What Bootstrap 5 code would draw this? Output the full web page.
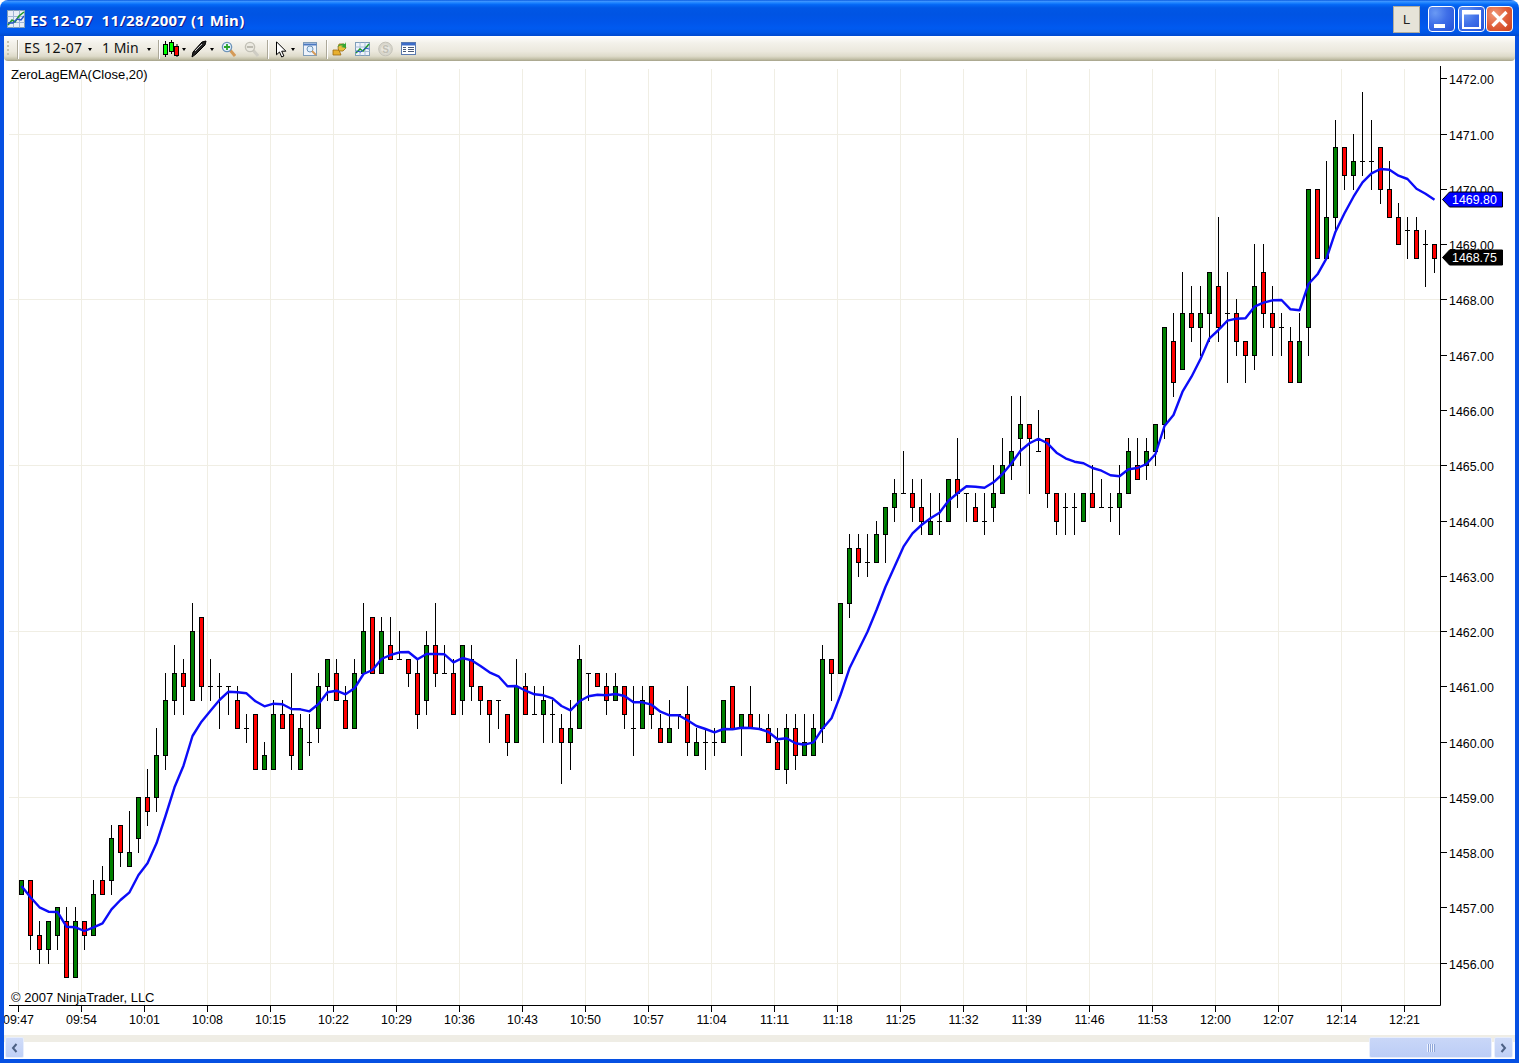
<!DOCTYPE html>
<html lang="en">
<head>
<meta charset="utf-8">
<title>ES 12-07 11/28/2007 (1 Min)</title>
<link href="https://cdn.jsdelivr.net/npm/bootstrap@5.3.0/dist/css/bootstrap.min.css" rel="stylesheet">
<style>
html,body{background:#fff;margin:0;overflow:hidden}
.xpwin{width:1519px;height:1063px}
.xptitle{height:36px;padding:6px 6px 0 7px;border-radius:8px 8px 0 0;
 background:linear-gradient(to bottom,#0a5ae0 0,#3c94ff 4%,#1c83ff 8%,#0468f6 13%,#0057e6 22%,#0054e3 40%,#0055ea 62%,#005af0 78%,#0056e6 90%,#0049cf 100%)}
.xptitle-ico{margin-top:4px}
.xptitle-text{margin-left:5px;font:700 15px/28px "Noto Sans","DejaVu Sans",sans-serif;letter-spacing:.4px;color:#fff;white-space:pre;text-shadow:1px 1px 0 #0f1a89}
.capbtn{width:27px;height:26px;padding:0;border:1px solid #fff;border-radius:4px;display:block}
.capbtn:hover{border-color:#fff}
.cap-min,.cap-max{background:radial-gradient(circle at 25% 25%,#6a9af4 0,#3f6fe8 45%,#2350d8 100%)}
.cap-max{margin-left:3px}
.cap-close{margin-left:1px;background:radial-gradient(circle at 30% 30%,#f09878 0,#e0603c 50%,#c8401c 100%)}
.capbtn-l{width:27px;height:27px;margin-right:8px;padding:0;background:#e6e3d8;border:1px solid #b2ad9c;border-radius:0;font:13px/25px "Liberation Sans",sans-serif;color:#222}
.capbtn-l:hover{background:#e6e3d8;border-color:#b2ad9c}
.xpclient{border:solid #0650e2;border-width:0 4px 4px;height:1027px;background:#fff}
.xptool{height:24px;margin-top:1px;border-radius:0 0 4px 4px;font:14px/24px "Noto Sans",sans-serif;color:#111;
 background:linear-gradient(to bottom,#fdfcf9 0,#f3f1ea 25%,#ebe8dd 60%,#dedbca 80%,#c3c0a8 92%,#a5a28a 100%)}
.tl-grip{width:2px;height:16px;margin-left:3px;background:repeating-linear-gradient(to bottom,#c4c1ae 0 2px,transparent 2px 4px)}
.tl-sep{width:1px;height:19px;background:#aca899;box-shadow:1px 0 0 #fff}
.tl-caret{width:0;height:0;border:solid transparent;border-width:3px 2.5px 0;border-top-color:#000}
.tl-es{width:64px;margin-left:6px;margin-top:-2px;white-space:nowrap;letter-spacing:.35px}
.tl-min{width:45px;margin-left:10px;margin-top:-2px;white-space:nowrap}
.g3{margin-left:3px}.g4{margin-left:4px}.g5{margin-left:5px}.g7{margin-left:7px}.g8{margin-left:8px}
.chartsvg{display:block}
.chartsvg text{font:12.4px "Liberation Sans",Arial,sans-serif;fill:#000}
.chartsvg text.caption{font-size:13px}
.chartsvg text.onflag{fill:#fff}
.scrollzone{height:24px;padding:2px 2px 1px 1px;background:linear-gradient(to bottom,#efede5 0 7px,#fff 7px)}
.sb-btn{width:19px;border:1px solid #e8eefc;border-radius:2px;background:linear-gradient(to bottom,#d0dcf9,#c0d0f6)}
.sb-thumb{width:123px;margin-left:auto;margin-right:2px;border:1px solid #e8eefc;border-radius:2px;background:linear-gradient(to bottom,#c9d7f8,#bccdf6)}
.sb-grip{width:8px;height:8px;background:repeating-linear-gradient(to right,#eef3ff 0 1px,#8fa6d8 1px 2px)}
</style>
</head>
<body>
<div class="xpwin d-flex flex-column">
  <div class="xptitle d-flex align-items-start">
    <svg class="xptitle-ico" width="18" height="18" viewBox="0 0 18 18"><rect x=".5" y=".5" width="17" height="17" fill="#e8eef8" stroke="#7f9db9"/><path d="M.5 6.5h17M.5 12.5h17M6.5.5v17M12.5.5v17" stroke="#9fb6d6" fill="none"/><polyline points="1,15 5,10 8,12 12,6 17,2" fill="none" stroke="#1f9a2c" stroke-width="1.6"/><polyline points="1,13 6,13 10,9 14,10 17,6" fill="none" stroke="#2a55c8" stroke-width="1.4"/></svg>
    <span class="xptitle-text">ES 12-07  11/28/2007 (1 Min)</span>
    <button class="btn capbtn-l ms-auto" type="button">L</button>
    <button class="btn capbtn cap-min" type="button" aria-label="Minimize"><svg width="25" height="24" viewBox="0 0 25 24" class="d-block"><rect x="5" y="17" width="11" height="4" fill="#fff"/></svg></button>
    <button class="btn capbtn cap-max" type="button" aria-label="Maximize"><svg width="25" height="24" viewBox="0 0 25 24" class="d-block"><path d="M4 4h17v17H4z" fill="none" stroke="#fff" stroke-width="2"/><path d="M4 6h17" stroke="#fff" stroke-width="3"/></svg></button>
    <button class="btn capbtn cap-close" type="button" aria-label="Close"><svg width="25" height="24" viewBox="0 0 25 24" class="d-block"><path d="M5.5 5l14 14M19.5 5l-14 14" stroke="#fff" stroke-width="3.2" fill="none"/></svg></button>
  </div>
  <div class="xpclient d-flex flex-column">
    <div class="xptool d-flex align-items-center">
      <div class="tl-grip"></div>
      <div class="tl-sep g8"></div>
      <span class="tl-es">ES 12-07</span><i class="tl-caret"></i>
      <span class="tl-min">1 Min</span><i class="tl-caret"></i>
      <div class="tl-sep g7"></div>
      <svg class="g4" width="16" height="18" viewBox="0 0 16 18"><path d="M2.5 1v16M8.5 0v14M14 4v13" stroke="#000" fill="none"/><rect x=".5" y="4.5" width="4" height="10" fill="#0f0" stroke="#000"/><rect x="6.5" y="2.5" width="4" height="9" fill="#0f0" stroke="#000"/><rect x="11.5" y="6.5" width="4" height="9" fill="#f00" stroke="#000"/></svg>
      <i class="tl-caret g3"></i>
      <svg class="g5" width="16" height="18" viewBox="0 0 16 18"><path d="M1 17l1-5L11 2l4-1-1 4-9 9z" fill="#222" stroke="#000"/><path d="M4 11l7-7" stroke="#ccc"/></svg>
      <i class="tl-caret g3"></i>
      <svg class="g7" width="15" height="16" viewBox="0 0 15 16"><path d="M9 9l5 6" stroke="#d49a58" stroke-width="3"/><circle cx="6" cy="6" r="4.6" fill="#e9f4ff" stroke="#6d94b8" stroke-width="1.4"/><path d="M6 3v6M3 6h6" stroke="#2aa52a" stroke-width="1.8"/></svg>
      <svg class="g8" width="15" height="16" viewBox="0 0 15 16"><path d="M9 9l5 6" stroke="#cfcdc4" stroke-width="3"/><circle cx="6" cy="6" r="4.6" fill="#eceae2" stroke="#c2c0b6" stroke-width="1.4"/><path d="M3 6h6" stroke="#b8b6ac" stroke-width="1.8"/></svg>
      <div class="tl-sep g8"></div>
      <svg class="g8" width="11" height="17" viewBox="0 0 11 17"><path d="M.5.8v13l3-2.8 2.2 5 2.2-1-2.2-4.8h4.2z" fill="#fff" stroke="#000"/></svg>
      <i class="tl-caret g4"></i>
      <svg class="g8" width="15" height="16" viewBox="0 0 15 16"><rect x=".5" y="1.5" width="13" height="13" fill="#eef3fb" stroke="#7f9db9"/><path d="M.5 3.5h13" stroke="#4a78c0" stroke-width="2"/><circle cx="7" cy="8" r="3" fill="#dff0ff" stroke="#6d94b8"/><path d="M9 10l4 4" stroke="#d49a58" stroke-width="2"/></svg>
      <div class="tl-sep g8"></div>
      <svg class="g5" width="15" height="16" viewBox="0 0 15 16"><path d="M1 9h6l2 5H1z" fill="#e8b030" stroke="#9c6a10" stroke-width=".8"/><path d="M6 7l1-4h5l2 4-3 3H7z" fill="#e8c040" stroke="#9c6a10" stroke-width=".8"/><path d="M5 6c2-3 5-4 8-3l1-2v6l-5-1 2-1c-2-1-4 0-6 1z" fill="#35a535"/></svg>
      <svg class="g8" width="15" height="16" viewBox="0 0 15 16"><rect x=".5" y="1.5" width="14" height="13" fill="#eef3fb" stroke="#7f9db9"/><path d="M.5 6h14M.5 10.5h14M5 1.5v13M10 1.5v13" stroke="#a8bcd8"/><polyline points="1,12 5,8 8,10 14,3" fill="none" stroke="#1f9a2c" stroke-width="1.5"/><polyline points="1,10 6,11 10,7 14,8" fill="none" stroke="#2a55c8"/></svg>
      <svg class="g8" width="15" height="16" viewBox="0 0 15 16"><circle cx="7.5" cy="8" r="6.8" fill="#d8d6cc" stroke="#c4c2b8"/><circle cx="7.5" cy="8" r="4.4" fill="#e8e6de"/><text x="7.5" y="11.5" text-anchor="middle" font-family="Liberation Sans" font-size="10" font-weight="700" fill="#c0beb4">S</text></svg>
      <svg class="g8" width="15" height="16" viewBox="0 0 15 16"><rect x=".5" y="1.5" width="14" height="12" fill="#fff" stroke="#5a7ab0"/><rect x="1" y="2" width="13" height="2.5" fill="#3c6cc8"/><path d="M2 6.5h3M2 8.5h3M2 10.5h3M7 6.5h6M7 8.5h6M7 10.5h6" stroke="#4a5a78"/></svg>
    </div>
    <svg id="chart" class="chartsvg mt-auto" width="1511" height="973" viewBox="4 62 1511 973"></svg>
    <div class="scrollzone d-flex">
      <div class="sb-btn d-flex align-items-center justify-content-center"><svg width="7" height="10" viewBox="0 0 7 10"><path d="M5.5 1L2 5l3.5 4" fill="none" stroke="#4d6185" stroke-width="2"/></svg></div>
      <div class="sb-thumb d-flex align-items-center justify-content-center"><div class="sb-grip"></div></div>
      <div class="sb-btn d-flex align-items-center justify-content-center"><svg width="7" height="10" viewBox="0 0 7 10"><path d="M1.5 1L5 5 1.5 9" fill="none" stroke="#4d6185" stroke-width="2"/></svg></div>
    </div>
  </div>
</div>
<script src="https://cdn.jsdelivr.net/npm/bootstrap@5.3.0/dist/js/bootstrap.bundle.min.js"></script>
<script>
(function(){
var bars=("g6,5,6,5 r6,2,6,1 r2,1,3,0 g3,1,3,0 g4,2,4,1 r3,-1,4,-1 g3,-1,4,-1 r3,2,3,1 g5,2,6,2 r6,5,7,5 "+
"g9,6,10,5 r10,8,10,7 g8,7,11,7 g12,9,12,8 r12,11,14,10 g15,12,17,11 g19,15,21,14 g21,19,23,18 r21,20,22,18 g24,19,26,19 "+
"r25,20,25,19 d20,20,22,19 d20,20,21,17 d20,20,20,18 r19,17,20,17 d17,17,18,16 r18,14,18,14 g15,14,16,14 g18,14,19,14 r18,17,19,17 "+
"r18,15,21,14 g17,14,18,14 d16,16,18,15 g20,17,21,16 g22,20,22,19 r21,19,22,19 r19,17,20,17 g21,17,22,17 g24,21,26,21 r25,21,25,21 "+
"g24,21,25,21 r23,22,25,22 d22,22,24,22 r22,21,22,20 r21,18,22,17 g23,19,24,18 r23,21,26,20 d21,21,23,21 r21,18,22,18 g23,19,23,18 "+
"r22,20,23,19 r20,19,20,18 r19,18,19,16 d19,19,19,17 r18,16,18,15 g20,16,22,16 r20,18,21,18 d18,18,20,18 g19,18,20,16 d18,18,19,16 "+
"r17,16,18,13 g17,16,19,14 g22,17,23,17 d21,21,21,19 r21,20,21,20 r20,19,21,18 g20,19,21,19 r20,18,20,17 d17,17,20,15 g19,17,20,17 "+
"r20,18,20,17 r17,16,18,16 g17,16,19,16 d18,18,18,17 r18,16,20,15 g16,15,17,15 d16,16,17,14 d16,16,17,15 g19,16,19,16 r20,17,20,17 "+
"g18,17,18,15 r18,17,20,17 d17,17,18,17 r17,16,18,16 r16,14,17,14 g17,14,18,13 r17,15,18,14 g16,15,18,15 g17,15,18,15 g22,17,23,16 "+
"r22,21,22,19 g26,21,26,21 g30,26,31,25 r30,29,31,28 d29,29,31,28 g31,29,32,29 g33,31,33,29 g34,33,35,32 d34,34,37,34 r34,33,35,32 "+
"r33,32,35,31 g32,31,34,31 d32,32,34,31 g35,32,35,32 r35,34,38,33 d34,34,34,32 r33,32,34,32 d32,32,34,31 g34,33,36,32 g36,34,38,34 "+
"g37,36,41,35 g39,38,41,36 r39,38,39,34 d37,37,40,37 r38,34,38,33 r34,32,34,31 d33,33,34,31 d33,33,34,31 g34,32,34,32 r34,33,36,33 "+
"d33,33,35,33 d33,33,34,32 g34,33,36,31 g37,34,38,34 r36,35,38,35 g37,36,38,35 g39,37,39,36 g46,39,46,38 r45,42,47,41 g47,43,50,43 "+
"r47,46,49,45 g47,46,49,44 g50,47,50,45 r49,46,54,45 d47,47,50,42 r47,45,48,44 r45,44,45,42 g49,44,52,43 r50,47,52,46 r47,46,49,44 "+
"d46,46,47,44 r45,42,46,42 g45,42,47,42 g56,46,56,44 r56,51,56,51 g54,51,58,51 g59,54,61,53 r59,57,59,56 g58,57,60,56 d58,58,63,57 "+
"d58,58,61,56 r59,56,59,55 r56,54,58,54 r54,52,55,52 d53,53,54,51 r53,51,54,51 d52,52,53,49 r52,51,52,50").split(" ");
function seg(b,a){return a.map(function(v){return b+v/3;});}
var ema=[].concat(
seg(600,[858,892,922,935,936,980,982,993,982,970,928,900,877,825,790,730,648,562,497,408,365,332,300,275,277,280,304,319,311,313,327,328,334,312,277,272,283,265]),
seg(600,[222,210,177,165,157,156,178,162,162,163,187,174,181,198,217,229,259,258,272,283,286,295,318,331,304,289,284,286,282,288,307,307,314,335,346,346,361,378]),
seg(530,[597,607,597,598,593,594,597,606,628,625,640,644,637,596,565,495,415,360,305,240,170,110,50]),
seg(380,[460,435,415,398,362,340,319,320,323,307,282,250,212,190,176,190,218,235,245,250,264,272,286,289,268,264,252,222]),
seg(320,[318,285,215]),
seg(210,[500,447,385,360,332,326,325,290,278,271,270,298,301]),
seg(85,[597,568,520,440,385,335,292,265,252,254,272,282,311,326,344]));
var Y=function(t){return Math.floor(963.2-13.818*t)+.5;};
var X=function(i){return 21.5+9*i;};
var s="",k;
var times="09:47 09:54 10:01 10:08 10:15 10:22 10:29 10:36 10:43 10:50 10:57 11:04 11:11 11:18 11:25 11:32 11:39 11:46 11:53 12:00 12:07 12:14 12:21".split(" ");
var grid="";
for(k=0;k<23;k++){var gx=18.5+63*k;grid+="M"+gx+" 69V1005";}
for(k=0;k<6;k++){grid+="M9 "+Y(12*k)+"H1440";}
s+='<path d="'+grid+'" stroke="#f0eee4" fill="none"/>';
var wick="",blk={g:"",r:""},doji="";
bars.forEach(function(b,n){
  var c=b[0],v=b.slice(1).split(",").map(Number),x=X(n);
  wick+="M"+x+" "+(Y(v[2])-.5)+"V"+(Y(v[3])+.5);
  if(c==="d"){doji+="M"+(x-2.5)+" "+Y(v[0])+"h5";}
  else{blk[c]+='<rect x="'+(x-2)+'" y="'+Y(v[0])+'" width="4" height="'+(Y(v[1])-Y(v[0]))+'" fill="'+(c==="g"?"#008000":"#f00")+'" stroke="#000"/>';}
});
s+='<path d="'+wick+doji+'" stroke="#000" fill="none"/>'+blk.g+blk.r;
s+='<polyline fill="none" stroke="#0c0cf8" stroke-width="2.4" stroke-linejoin="round" points="'+ema.map(function(y,n){return X(n)+","+y.toFixed(1);}).join(" ")+'"/>';
var ax="M1440.5 66V1005.5M9 1005.5H1440.5";
for(k=0;k<=16;k++){ax+="M1441 "+Y(k*4)+"h6";}
for(k=0;k<23;k++){ax+="M"+(18.5+63*k)+" 1006v6";}
s+='<path d="'+ax+'" stroke="#000" fill="none"/>';
for(k=0;k<=16;k++){s+='<text x="1449" y="'+(Y(k*4)+5.5)+'">'+(1456+k)+'.00</text>';}
times.forEach(function(t,n){s+='<text x="'+(18.5+63*n)+'" y="1023.5" text-anchor="middle">'+t+'</text>';});
s+='<text class="caption" x="11" y="79">ZeroLagEMA(Close,20)</text><text class="caption" x="11" y="1002">\u00a9 2007 NinjaTrader, LLC</text>';
function flag(cy,fill,txt){return '<polygon points="1442.5,'+cy+' 1449.5,'+(cy-7.5)+' 1502.5,'+(cy-7.5)+' 1502.5,'+(cy+7.5)+' 1449.5,'+(cy+7.5)+'" fill="'+fill+'" stroke="#000"/><text class="onflag" x="1452" y="'+(cy+4.5)+'">'+txt+'</text>';}
s+=flag(199.5,"#00f","1469.80")+flag(257.5,"#000","1468.75");
document.getElementById("chart").innerHTML=s;
})();
</script>
</body>
</html>
